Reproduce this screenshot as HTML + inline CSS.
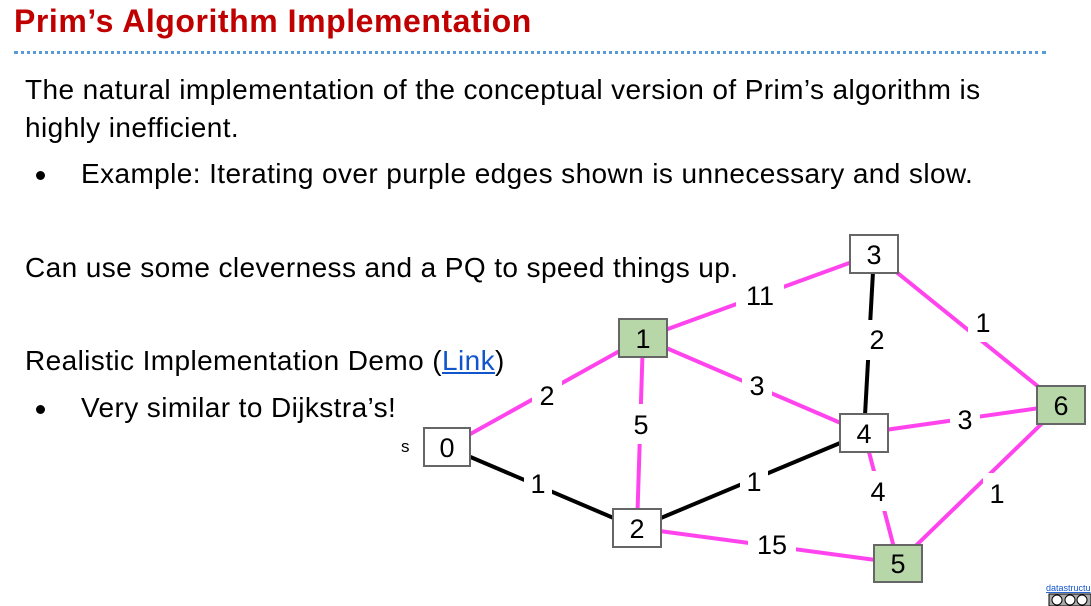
<!DOCTYPE html>
<html><head><meta charset="utf-8"><style>
body{margin:0;width:1091px;height:606px;overflow:hidden;background:#fff;font-family:"Liberation Sans",sans-serif;position:relative}
.t{position:absolute;white-space:nowrap;color:#000;font-size:28px;letter-spacing:0.4px;line-height:32px}
h1{position:absolute;left:14px;top:3px;margin:0;font-size:32px;color:#c00000;font-weight:bold;letter-spacing:0.55px;white-space:nowrap}
.dots{position:absolute;left:14px;top:51px;width:1032px;border-top:3px dotted #5b9bd5;height:0}
.b{position:absolute;width:9px;height:9px;border-radius:50%;background:#000}
</style></head><body>
<h1>Prim’s Algorithm Implementation</h1>
<div class="dots"></div>
<div class="t" style="left:25px;top:74px">The natural implementation of the conceptual version of Prim’s algorithm is</div>
<div class="t" style="left:25px;top:112px">highly inefficient.</div>
<div class="b" style="left:36px;top:171px"></div>
<div class="t" style="left:81px;top:158px">Example: Iterating over purple edges shown is unnecessary and slow.</div>
<div class="t" style="left:25px;top:252px">Can use some cleverness and a PQ to speed things up.</div>
<div class="t" style="left:25px;top:345px">Realistic Implementation Demo (<span style="color:#1155cc;text-decoration:underline">Link</span>)</div>
<div class="b" style="left:36px;top:405px"></div>
<div class="t" style="left:81px;top:392px">Very similar to Dijkstra’s!</div>
<svg width="1091" height="606" style="position:absolute;left:0;top:0" font-family="Liberation Sans,sans-serif" font-size="27">
<g stroke="#ff44ee" stroke-width="4">
<line x1="447" y1="447" x2="643" y2="338"/><line x1="643" y1="338" x2="637" y2="528"/>
<line x1="643" y1="338" x2="874" y2="254"/><line x1="643" y1="338" x2="864" y2="433"/>
<line x1="874" y1="254" x2="1061" y2="405"/><line x1="864" y1="433" x2="1061" y2="405"/>
<line x1="864" y1="433" x2="898" y2="563"/><line x1="1061" y1="405" x2="898" y2="563"/>
<line x1="637" y1="528" x2="898" y2="563"/></g>
<g stroke="#000" stroke-width="4">
<line x1="447" y1="447" x2="637" y2="528"/><line x1="637" y1="528" x2="864" y2="433"/>
<line x1="874" y1="254" x2="864" y2="433"/></g>
<g fill="#fff">
<rect x="532" y="375" width="30" height="36"/><rect x="627" y="404" width="28" height="40"/>
<rect x="736" y="275" width="48" height="40"/><rect x="742" y="366" width="30" height="40"/>
<rect x="968" y="302" width="30" height="40"/><rect x="950" y="400" width="30" height="40"/>
<rect x="864" y="471" width="28" height="40"/><rect x="983" y="473" width="28" height="40"/>
<rect x="748" y="525" width="48" height="40"/><rect x="524" y="463" width="28" height="40"/>
<rect x="740" y="461" width="28" height="40"/><rect x="863" y="320" width="28" height="40"/>
</g>
<g text-anchor="middle">
<text x="547" y="405">2</text><text x="641" y="434">5</text><text x="760" y="305">11</text>
<text x="757" y="395">3</text><text x="983" y="332">1</text><text x="965" y="429">3</text>
<text x="878" y="501">4</text><text x="997" y="503">1</text><text x="772" y="554">15</text>
<text x="538" y="493">1</text><text x="754" y="491">1</text><text x="877" y="349">2</text>
</g>
<g stroke="#666" stroke-width="2">
<rect x="424" y="428" width="46" height="38" fill="#fff"/>
<rect x="619" y="319" width="48" height="38" fill="#b7d7a8"/>
<rect x="613" y="509" width="48" height="38" fill="#fff"/>
<rect x="850" y="235" width="48" height="38" fill="#fff"/>
<rect x="840" y="414" width="48" height="38" fill="#fff"/>
<rect x="874" y="545" width="48" height="37" fill="#b7d7a8"/>
<rect x="1037" y="386" width="48" height="38" fill="#b7d7a8"/>
</g>
<g text-anchor="middle">
<text x="447" y="457">0</text><text x="643" y="348">1</text><text x="637" y="538">2</text>
<text x="874" y="264">3</text><text x="864" y="443">4</text><text x="898" y="573">5</text><text x="1061" y="415">6</text>
</g>
<text x="401" y="452" font-size="17">s</text>
<text x="1046" y="591" font-size="9" fill="#1155cc" text-decoration="underline">datastructu</text>
<rect x="1049" y="594" width="42" height="12" fill="#aaa" stroke="#000"/>
<circle cx="1057" cy="600" r="5" fill="#fff" stroke="#000"/><circle cx="1070" cy="600" r="5" fill="#fff" stroke="#000"/><circle cx="1082" cy="600" r="5" fill="#fff" stroke="#000"/>
</svg>
</body></html>
